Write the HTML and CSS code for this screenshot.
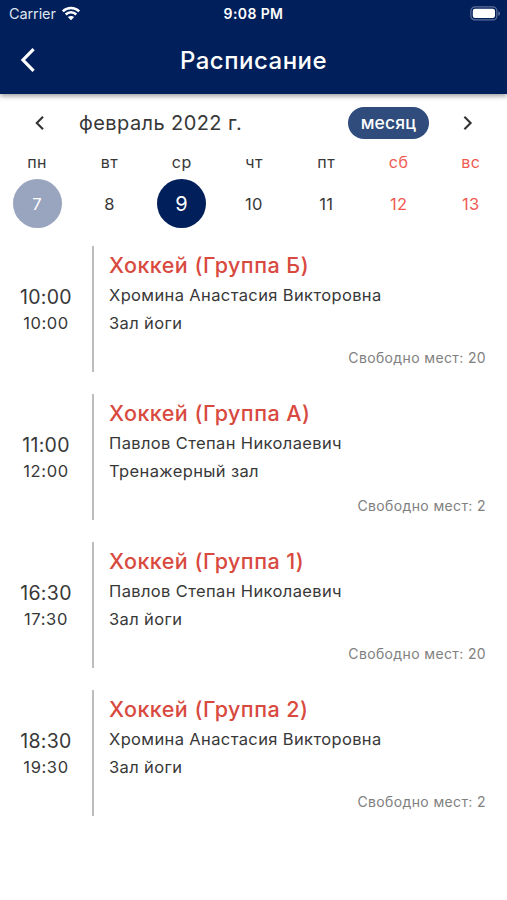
FILE: index.html
```
<!doctype html>
<html lang="ru">
<head>
    <meta charset="utf-8">
    <title>Расписание</title>
    <link rel="stylesheet" href="styles.css">
</head>

<body>
    <!-- шапка -->
    <header class="header">
        <div class="status">
            <div class="carrier">
                <span>Carrier</span>
                <svg class="wifi" width="20" height="15" viewBox="0 0 20 15">
                    <path d="M1.8 5.4C6.4 0.9 13.6 0.9 18.2 5.4M4.7 8.5C7.7 5.6 12.3 5.6 15.3 8.5" fill="none" stroke="#fff" stroke-width="2.5"/>
                    <path d="M10 14.2L6.8 11C8.6 9.5 11.4 9.5 13.2 11Z" fill="#fff"/>
                </svg>
            </div>
            <div class="clock">9:08 PM</div>
            <svg class="battery" width="31" height="15" viewBox="0 0 31 15">
                <rect x="0.9" y="0.9" width="26" height="13" rx="4" fill="none" stroke="#5f7199" stroke-width="1.2"/>
                <rect x="2.8" y="2.8" width="22.2" height="9.2" rx="2.2" fill="#fff"/>
                <path d="M28.3 5.2C30.6 6 30.6 9 28.3 9.8Z" fill="#5f7199"/>
            </svg>
        </div>
        <div class="navbar">
            <svg class="back" width="16" height="26" viewBox="0 0 16 26">
                <path d="M13.6 2.2L3 13L13.6 23.8" fill="none" stroke="#fff" stroke-width="3.2"/>
            </svg>
            <h1 class="title">Расписание</h1>
        </div>
    </header>

    <!-- календарь -->
    <section class="calendar">
        <div class="month">
            <svg class="arrow" width="10" height="16" viewBox="0 0 10 16">
                <path d="M9 1.8L2.8 8L9 14.2" fill="none" stroke="#333" stroke-width="2.1"/>
            </svg>
            <span class="month-name">февраль 2022 г.</span>
            <span class="mode">месяц</span>
            <svg class="arrow" width="10" height="16" viewBox="0 0 10 16">
                <path d="M1.4 1.8L7.6 8L1.4 14.2" fill="none" stroke="#333" stroke-width="2.1"/>
            </svg>
        </div>
        <div class="week">
            <div class="day"><span class="name">пн</span><span class="num today">7</span></div>
            <div class="day"><span class="name">вт</span><span class="num">8</span></div>
            <div class="day"><span class="name">ср</span><span class="num current">9</span></div>
            <div class="day"><span class="name">чт</span><span class="num">10</span></div>
            <div class="day"><span class="name">пт</span><span class="num">11</span></div>
            <div class="day weekend"><span class="name">сб</span><span class="num">12</span></div>
            <div class="day weekend"><span class="name">вс</span><span class="num">13</span></div>
        </div>
    </section>

    <!-- занятия -->
    <ul class="list">
        <li class="item">
            <div class="time"><span class="start">10:00</span><span class="end">10:00</span></div>
            <div class="info">
                <h2 class="lesson">Хоккей (Группа Б)</h2>
                <p class="text">Хромина Анастасия Викторовна</p>
                <p class="text">Зал йоги</p>
                <p class="free">Свободно мест: 20</p>
            </div>
        </li>
        <li class="item">
            <div class="time"><span class="start">11:00</span><span class="end">12:00</span></div>
            <div class="info">
                <h2 class="lesson">Хоккей (Группа А)</h2>
                <p class="text">Павлов Степан Николаевич</p>
                <p class="text">Тренажерный зал</p>
                <p class="free">Свободно мест: 2</p>
            </div>
        </li>
        <li class="item">
            <div class="time"><span class="start">16:30</span><span class="end">17:30</span></div>
            <div class="info">
                <h2 class="lesson">Хоккей (Группа 1)</h2>
                <p class="text">Павлов Степан Николаевич</p>
                <p class="text">Зал йоги</p>
                <p class="free">Свободно мест: 20</p>
            </div>
        </li>
        <li class="item">
            <div class="time"><span class="start">18:30</span><span class="end">19:30</span></div>
            <div class="info">
                <h2 class="lesson">Хоккей (Группа 2)</h2>
                <p class="text">Хромина Анастасия Викторовна</p>
                <p class="text">Зал йоги</p>
                <p class="free">Свободно мест: 2</p>
            </div>
        </li>
    </ul>
</body>
</html>
```
FILE: styles.css
```
* {
    padding: 0;
    margin: 0;
    list-style: none;
    box-sizing: border-box;
}

body {
    font-family: Inter, "Liberation Sans", sans-serif;
    color: #383838;
    background: #fff;
}

.header {
    height: 94px;
    background: #001f5b;
    color: #fff;
    box-shadow: 0 2px 5px rgba(0, 0, 0, 0.4);
}

.status {
    display: grid;
    grid-template-columns: 1fr auto 1fr;
    align-items: center;
    height: 27px;
    padding: 0 6px 0 9px;
}

.carrier {
    display: flex;
    align-items: center;
    gap: 5px;
    font-size: 14.5px;
    letter-spacing: -0.1px;
    color: #dfe4ee;
}

.clock {
    padding-right: 3px;
    font-size: 14px;
    font-weight: 600;
    letter-spacing: 0.4px;
}

.battery {
    justify-self: end;
}

.navbar {
    display: grid;
    grid-template-columns: 36px 1fr 36px;
    align-items: center;
    height: 66px;
}

.back {
    justify-self: end;
}

.title {
    font-size: 24px;
    font-weight: 500;
    letter-spacing: 0.5px;
    text-align: center;
}

.month {
    display: flex;
    align-items: center;
    height: 58px;
    padding: 0 34px;
}

.month-name {
    flex: 1;
    padding-left: 35px;
    font-size: 20px;
    line-height: 24px;
    letter-spacing: 0.42px;
}

.mode {
    width: 81px;
    height: 32px;
    margin-right: 34px;
    border-radius: 16px;
    background: #304c7c;
    color: #fff;
    font-size: 17.5px;
    font-weight: 500;
    line-height: 32px;
    text-align: center;
    letter-spacing: 0.2px;
}

.week {
    display: grid;
    grid-template-columns: repeat(7, 1fr);
    padding: 0 0 0 1px;
}

.day {
    display: flex;
    flex-direction: column;
    align-items: center;
}

.name {
    height: 27px;
    font-size: 16px;
    line-height: 21px;
    letter-spacing: 0.5px;
}

.num {
    width: 49px;
    height: 49px;
    border-radius: 50%;
    font-size: 16.5px;
    line-height: 50px;
    text-align: center;
    letter-spacing: 0.3px;
}

.today {
    background: #99a5be;
    color: #fff;
}

.current {
    background: #001f5b;
    color: #fff;
    font-size: 20px;
}

.weekend {
    color: #f05a50;
}

.list {
    padding-top: 18px;
}

.item {
    display: flex;
    height: 126px;
    margin-bottom: 22px;
}

.time {
    display: flex;
    flex-direction: column;
    justify-content: center;
    align-items: center;
    width: 92px;
}

.start {
    font-size: 19.5px;
    line-height: 28px;
    letter-spacing: 0.3px;
}

.end {
    font-size: 16.5px;
    line-height: 25px;
    letter-spacing: 0.6px;
}

.info {
    flex: 1;
    padding: 5px 21px 0 15px;
    border-left: 2px solid #bdbdbd;
}

.lesson {
    padding-bottom: 1px;
    font-size: 21.5px;
    font-weight: 500;
    line-height: 29px;
    letter-spacing: 0.47px;
    color: #d84a40;
}

.text {
    font-size: 16.5px;
    line-height: 28px;
    letter-spacing: 0.37px;
}

.free {
    padding-top: 9px;
    font-size: 14px;
    line-height: 24px;
    text-align: right;
    letter-spacing: 0.37px;
    color: #808080;
}
```
